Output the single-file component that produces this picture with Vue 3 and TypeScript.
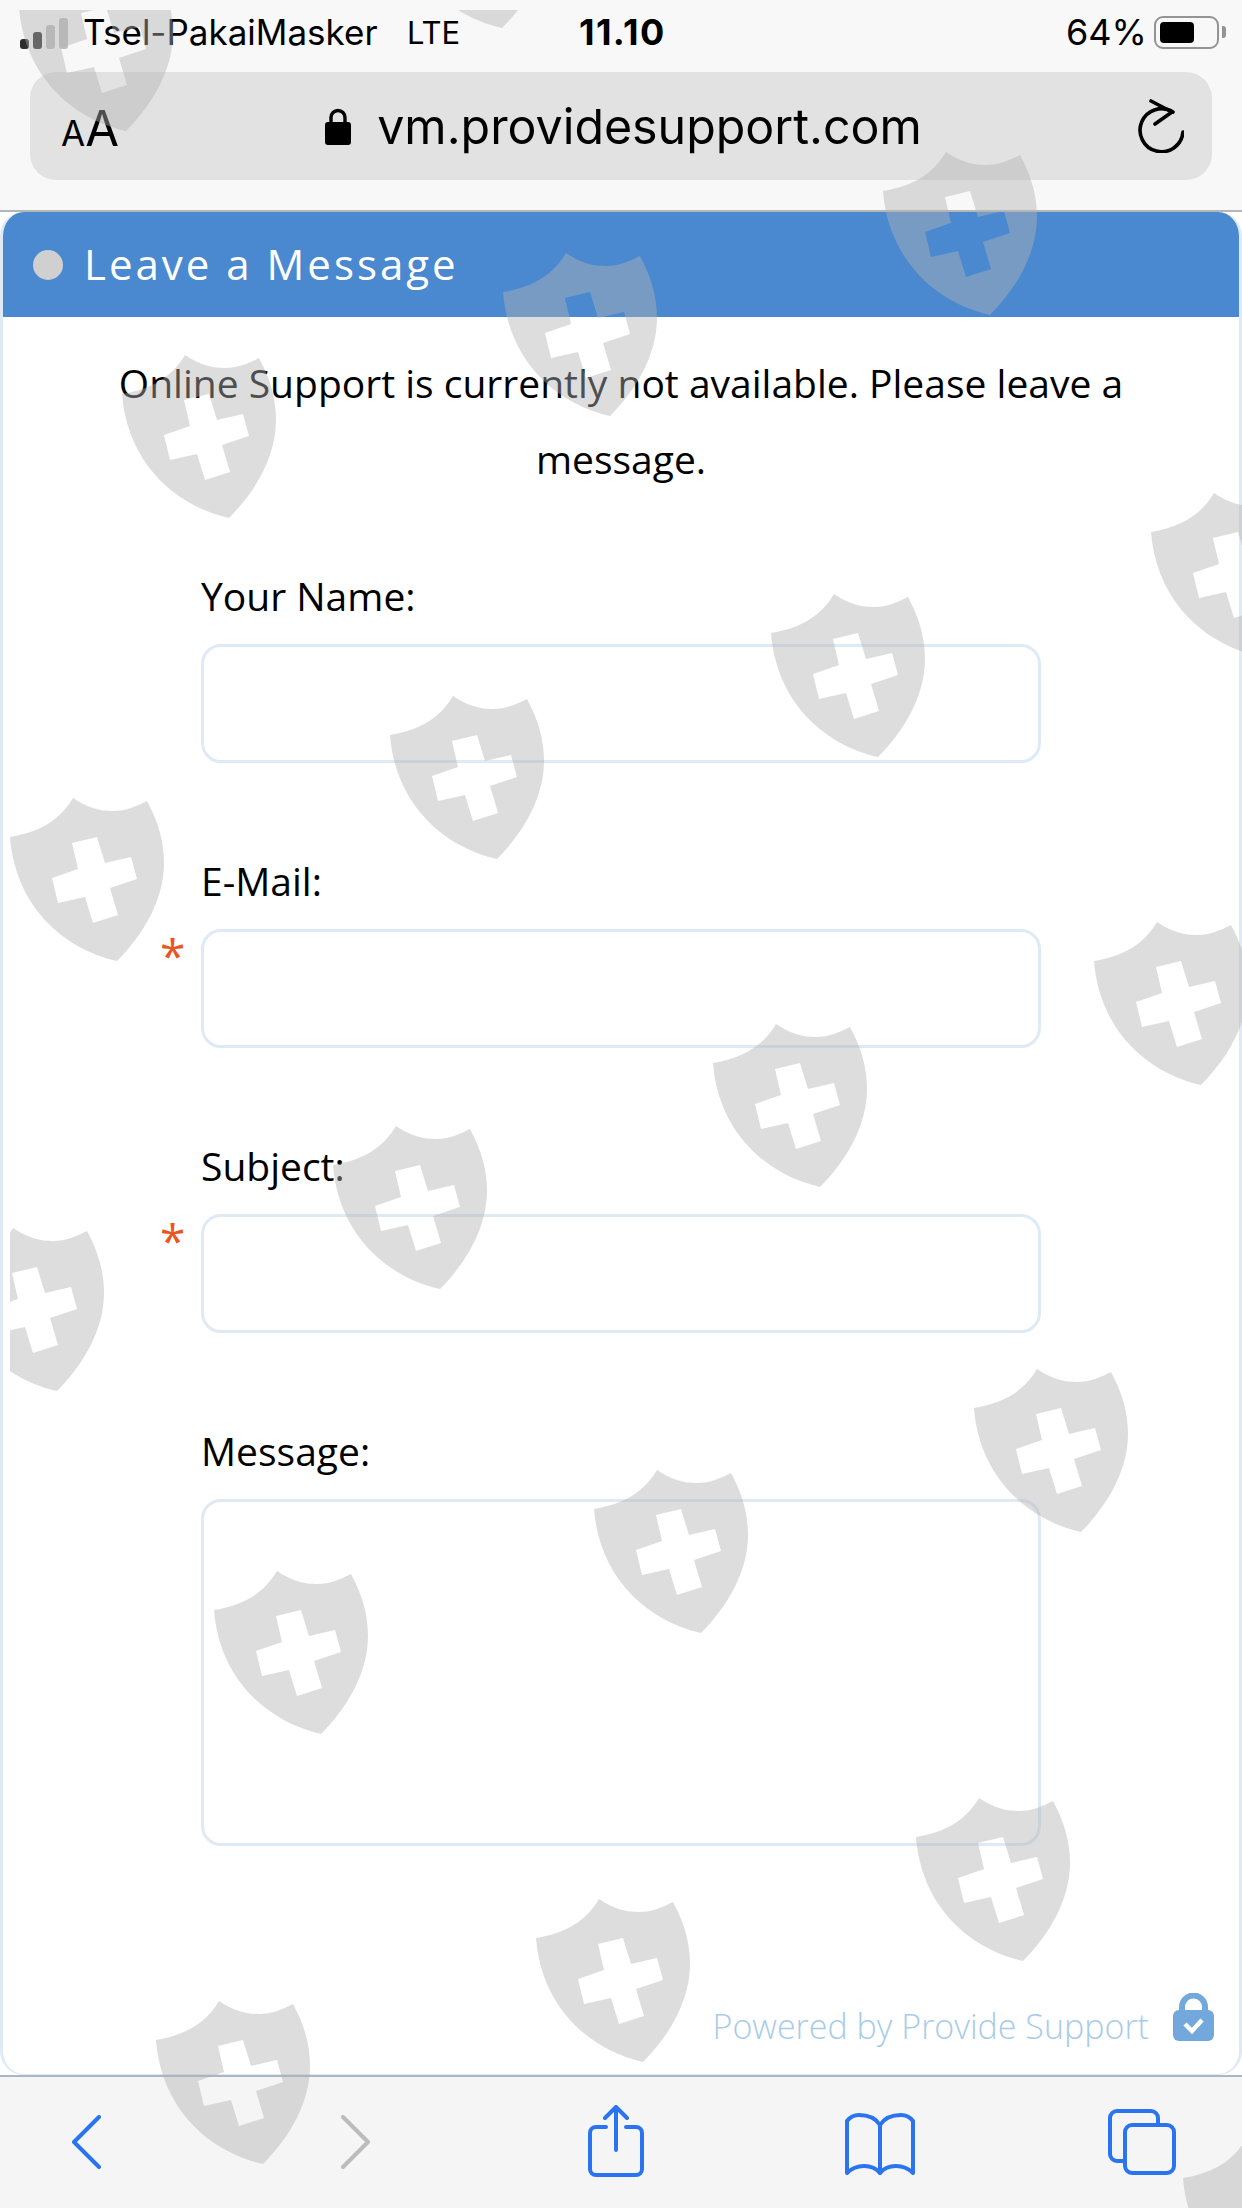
<template>
  <div class="phone">
    <!-- browser chrome -->
    <header class="chrome">
      <div class="status-bar">
        <div class="signal">
          <i v-for="(h, i) in signalBars" :key="i" :class="{ on: i < 2 }" :style="{ height: h + 'px' }"></i>
        </div>
        <span class="carrier">Tsel-PakaiMasker</span>
        <span class="network">LTE</span>
        <span class="clock">11.10</span>
        <span class="percent">64%</span>
        <div class="battery"><b></b></div>
        <div class="battery-nub"></div>
      </div>
      <div class="url-bar">
        <span class="aa"><small>A</small>A</span>
        <div class="url">
          <svg class="lock" width="26" height="38" viewBox="0 0 26 38">
            <path d="M6 17V10.500a7 7 0 0 1 14 0V17" fill="none" stroke="#000" stroke-width="3.400" />
            <rect x="0" y="15" width="26" height="23" rx="3" fill="#000" />
          </svg>
          <span>vm.providesupport.com</span>
        </div>
        <svg class="reload" width="46" height="54" viewBox="0 0 46 54" fill="none" stroke="#000" stroke-width="3.600" stroke-linecap="round" stroke-linejoin="round">
          <path d="M35 13A21.500 21.500 0 1 0 45 33" />
          <path d="M13 2l21 11-17 12" />
        </svg>
      </div>
    </header>

    <!-- chat form -->
    <main class="card">
      <div class="card-title">
        <span class="dot"></span>
        <h1>Leave a Message</h1>
      </div>
      <p class="notice">Online Support is currently not available. Please leave a message.</p>
      <form class="form">
        <div v-for="f in fields" :key="f.label" class="field">
          <label>{{ f.label }}</label>
          <div class="control">
            <span v-if="f.required" class="star">*</span>
            <textarea v-if="f.multiline"></textarea>
            <input v-else type="text" />
          </div>
        </div>
      </form>
      <footer class="powered">
        <span>Powered by Provide Support</span>
        <svg width="41" height="48" viewBox="0 0 41 48">
          <path d="M9 22V14a11.500 11.500 0 0 1 23 0v8" fill="none" stroke="#72a8dc" stroke-width="6" />
          <rect x="0" y="17" width="41" height="31" rx="6" fill="#72a8dc" />
          <path d="M12 31l7 7 10-11" fill="none" stroke="#fff" stroke-width="4.500" />
        </svg>
      </footer>
    </main>

    <!-- safari toolbar -->
    <nav class="toolbar">
      <svg class="tool" width="30" height="54" viewBox="0 0 30 54" fill="none" stroke="#2a74f0" stroke-width="4" stroke-linecap="round" stroke-linejoin="round">
        <path d="M28 2L3 27l25 25" />
      </svg>
      <svg class="tool" width="30" height="54" viewBox="0 0 30 54" fill="none" stroke="#bcbcbc" stroke-width="4" stroke-linecap="round" stroke-linejoin="round">
        <path d="M2 2l25 25L2 52" />
      </svg>
      <svg class="tool" width="56" height="72" viewBox="0 0 56 72" fill="none" stroke="#2a74f0" stroke-width="4" stroke-linecap="round" stroke-linejoin="round">
        <path d="M18 22H8a6 6 0 0 0-6 6v36a6 6 0 0 0 6 6h40a6 6 0 0 0 6-6V28a6 6 0 0 0-6-6H38" />
        <path d="M28 45V2M17 13L28 2l11 11" />
      </svg>
      <svg class="tool" width="70" height="62" viewBox="0 0 70 62" fill="none" stroke="#2a74f0" stroke-width="4" stroke-linecap="round" stroke-linejoin="round">
        <path d="M35 12C30 4 22 2 14 2 9 2 5 4 2 8v52c6-6 11-7 17-7 7 0 12 2 16 7 4-5 9-7 16-7 6 0 11 1 17 7V8c-3-4-7-6-12-6-8 0-16 2-21 10z" />
        <path d="M35 12v48" />
      </svg>
      <svg class="tool" width="68" height="66" viewBox="0 0 68 66" fill="none" stroke="#2a74f0" stroke-width="4" stroke-linecap="round" stroke-linejoin="round">
        <path d="M16 52H9a7 7 0 0 1-7-7V9a7 7 0 0 1 7-7h34a7 7 0 0 1 7 7v7" />
        <rect x="17" y="16" width="49" height="48" rx="7" />
      </svg>
    </nav>

    <!-- watermark laid over the whole screenshot -->
    <div class="watermarks">
      <svg
        v-for="(s, i) in shields"
        :key="i"
        class="shield"
        :style="{ left: s[0] - 10 + 'px', top: s[1] - 10 + 'px' }"
        width="155"
        height="165"
        viewBox="0 0 155 165"
      >
        <path
          fill-rule="evenodd"
          d="M63 0C78 10 90 13 103 13 116 13 127 8 137 3 149 25 154 45 154 65 154 100 135 135 107 163 50 150 5 105 0 39 30 34 50 22 63 0ZM62 45L87 39 95 65 121 59 127 81 100 90 108 117 83 125 75 99 48 105 42 80 68 71Z"
        />
      </svg>
    </div>
  </div>
</template>

<script setup lang="ts">
interface Field {
  label: string
  required?: boolean
  multiline?: boolean
}

const signalBars = [10, 17, 24, 31]

const fields: Field[] = [
  { label: 'Your Name:' },
  { label: 'E-Mail:', required: true },
  { label: 'Subject:', required: true },
  { label: 'Message:', multiline: true }
]

// top-left corner of each shield, page pixels
const shields: [number, number][] = [
  [19, -32], [395, -135],
  [122, 355], [503, 253], [883, 152],
  [10, 798], [390, 696], [771, 594], [1151, 493],
  [-50, 1228], [333, 1126], [713, 1024], [1094, 922],
  [214, 1571], [594, 1470], [974, 1369],
  [156, 2001], [536, 1899], [916, 1798],
  [1183, 2139]
]
</script>

<style>
html,
body {
  margin: 0;
  background: #fff;
}
</style>

<style scoped>
.phone {
  position: relative;
  display: flex;
  flex-direction: column;
  width: 1242px;
  height: 2208px;
  overflow: hidden;
  background: #fff;
  font-family: "Open Sans", "Liberation Sans", sans-serif;
  color: #000;
}

.chrome {
  flex: none;
  box-sizing: border-box;
  height: 212px;
  padding-top: 8px;
  background: #f8f8f8;
  border-bottom: 2px solid #b4b6b8;
  font-family: Inter, "Liberation Sans", sans-serif;
}

.status-bar {
  display: flex;
  align-items: center;
  height: 48px;
  padding-left: 20px;
  font-size: 35px;
}

.signal {
  display: flex;
  align-items: flex-end;
  gap: 4px;
  height: 33px;
  margin-right: 15px;
}

.signal i {
  width: 9px;
  border-radius: 3px;
  background: #bdbdbd;
}

.signal i.on {
  background: #2c2c2c;
}

.carrier {
  width: 324px;
}

.network {
  width: 172px;
  font-size: 31px;
}

.clock {
  width: 487px;
  font-size: 36px;
  font-weight: 700;
  letter-spacing: 1.4px;
}

.percent {
  font-size: 36px;
}

.battery {
  box-sizing: border-box;
  width: 65px;
  height: 33px;
  margin-left: 7px;
  padding: 4px;
  border: 2px solid #949494;
  border-radius: 9px;
}

.battery b {
  display: block;
  width: 34px;
  height: 21px;
  border-radius: 4px;
  background: #000;
}

.battery-nub {
  width: 4px;
  height: 12px;
  margin-left: 3px;
  border-radius: 0 3px 3px 0;
  background: #949494;
}

.url-bar {
  display: flex;
  align-items: center;
  height: 108px;
  margin: 16px 30px 0;
  padding: 0 28px 0 31px;
  border-radius: 26px;
  background: #e2e2e2;
}

.aa {
  width: 60px;
  font-size: 49px;
  line-height: 1;
  padding-top: 4px;
}

.aa small {
  font-size: 35px;
}

.url {
  flex: 1;
  display: flex;
  align-items: center;
  justify-content: center;
  gap: 26px;
  font-size: 48.300px;
  padding-right: 12px;
}

.card {
  flex: 1;
  display: flex;
  flex-direction: column;
  min-height: 0;
  border: 3px solid #dfeaf7;
  border-top: 0;
  border-bottom-width: 1px;
  border-radius: 24px;
  background: #fff;
  overflow: hidden;
}

.card-title {
  flex: none;
  display: flex;
  align-items: center;
  gap: 21px;
  height: 105px;
  padding-left: 30px;
  background: #4a89d0;
  color: #fff;
}

.dot {
  width: 30px;
  height: 30px;
  border-radius: 50%;
  background: #d0d0d0;
}

.card-title h1 {
  margin: 0 0 2px;
  font-size: 42px;
  font-weight: 400;
  letter-spacing: 3px;
}

.notice {
  margin: 28px auto 0;
  width: 1100px;
  font-size: 39px;
  line-height: 76px;
  text-align: center;
}

.form {
  width: 840px;
  margin: 74px 0 0 198px;
}

.field {
  margin-bottom: 93px;
}

.field:last-child {
  margin-bottom: 0;
}

.field label {
  display: block;
  height: 50px;
  margin-bottom: 23px;
  font-size: 39px;
  line-height: 50px;
}

.control {
  position: relative;
}

.control input,
.control textarea {
  display: block;
  box-sizing: border-box;
  width: 100%;
  height: 119px;
  border: 3px solid #dfeaf7;
  border-radius: 20px;
  background: transparent;
  outline: none;
  resize: none;
}

.control textarea {
  height: 347px;
}

.star {
  position: absolute;
  left: -41px;
  top: -8px;
  font-size: 46px;
  line-height: 68px;
  color: #e9561f;
}

.powered {
  display: flex;
  align-items: flex-end;
  justify-content: flex-end;
  gap: 24px;
  margin-top: auto;
  padding: 0 25px 33px 0;
  font-size: 34px;
  font-weight: 300;
  line-height: 40px;
  color: #a9cbea;
}

.powered span {
  margin-bottom: -5px;
}

.toolbar {
  flex: none;
  position: relative;
  display: flex;
  box-sizing: border-box;
  height: 133px;
  background: #f5f5f6;
  border-top: 2px solid #a9b6c4;
}

.tool {
  position: absolute;
}

.tool:nth-child(1) {
  left: 71px;
  top: 38px;
}

.tool:nth-child(2) {
  left: 341px;
  top: 38px;
}

.tool:nth-child(3) {
  left: 588px;
  top: 28px;
}

.tool:nth-child(4) {
  left: 845px;
  top: 36px;
}

.tool:nth-child(5) {
  left: 1108px;
  top: 32px;
}

.watermarks {
  position: absolute;
  left: 10px;
  top: 10px;
  right: 0;
  bottom: 0;
  overflow: hidden;
  pointer-events: none;
}

.shield {
  position: absolute;
}

.shield path {
  fill: rgba(178, 178, 178, 0.44);
}
</style>
